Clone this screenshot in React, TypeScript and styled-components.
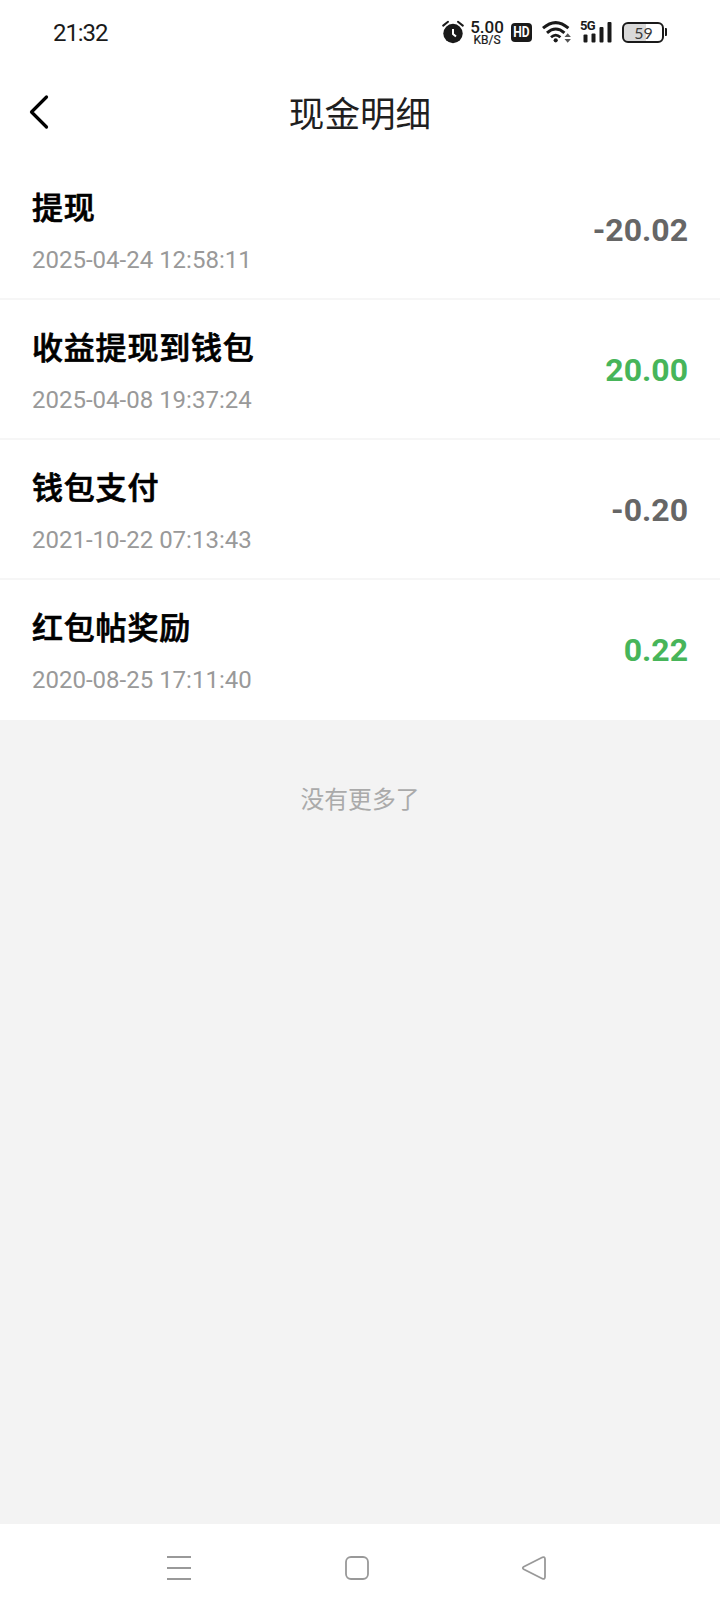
import React from "react";
import styled, { createGlobalStyle } from "styled-components";

const GlobalStyle = createGlobalStyle`
  * { box-sizing: border-box; }
  body {
    margin: 0;
    background: #f3f3f3;
    font-family: Roboto, "Noto Sans CJK SC", sans-serif;
  }
`;

const Screen = styled.div`
  width: 720px;
  height: 1612px;
  display: flex;
  flex-direction: column;
  background: #f3f3f3;
`;

const StatusBar = styled.header`
  height: 64px;
  padding: 0 53px 0 53px;
  display: flex;
  align-items: center;
  justify-content: space-between;
  background: #fff;
  color: #1a1a1a;
`;

const Clock = styled.time`
  font-size: 24px;
  line-height: 28px;
  letter-spacing: -1.1px;
  padding-top: 1px;
`;

const StatusIcons = styled.div`
  display: flex;
  align-items: center;
`;

const Rate = styled.div`
  width: 34px;
  margin: 2px 7px 0 6px;
  display: flex;
  flex-direction: column;
  align-items: center;
`;

const RateValue = styled.span`
  font-size: 17px;
  line-height: 14px;
  font-weight: 500;
`;

const RateUnit = styled.span`
  font-size: 12px;
  line-height: 12px;
  font-weight: 400;
  -webkit-text-stroke: 0.2px currentColor;
`;

const HdBadge = styled.span`
  width: 21px;
  height: 19px;
  border-radius: 4px;
  margin-right: 10px;
  margin-top: 1px;
  background: #1a1a1a;
  color: #fff;
  display: flex;
  align-items: center;
  justify-content: center;
  font-size: 14px;
  line-height: 19px;
  font-weight: 700;

  & > span {
    transform: scaleX(0.86);
  }
`;

const Signal = styled.div`
  width: 32px;
  height: 22px;
  margin-left: 9px;
  position: relative;
`;

const Generation = styled.span`
  position: absolute;
  left: -1px;
  top: -2px;
  font-size: 13px;
  line-height: 13px;
  font-weight: 700;
  letter-spacing: -0.8px;
`;

const Battery = styled.div`
  display: flex;
  align-items: center;
  gap: 1px;
  margin-left: 9px;

  &::after {
    content: "";
    width: 2px;
    height: 8px;
    border-radius: 0 1px 1px 0;
    background: #1a1a1a;
  }
`;

const BatteryBody = styled.span<{ $level: number }>`
  width: 42px;
  height: 21px;
  border: 2px solid #1a1a1a;
  border-radius: 6px;
  background: linear-gradient(
    to right,
    #d9d9d9 ${(p) => p.$level}%,
    #fff ${(p) => p.$level}%
  );
  color: #3a3a3a;
  font-family: Lato, sans-serif;
  font-size: 16px;
  line-height: 17px;
  padding-left: 1px;
  text-align: center;
`;

const NavBar = styled.nav`
  height: 96px;
  display: grid;
  grid-template-columns: 80px 1fr 80px;
  align-items: center;
  background: #fff;
`;

const BackButton = styled.button`
  height: 96px;
  padding: 0 0 0 28px;
  border: 0;
  background: none;
  display: flex;
  align-items: center;
`;

const Title = styled.h1`
  margin: 0;
  padding-top: 6px;
  font-size: 35.6px;
  line-height: 52px;
  font-weight: 400;
  text-align: center;
  color: #1f1f1f;
`;

const List = styled.ul`
  margin: 0;
  padding: 0;
  list-style: none;
  background: #fff;
`;

const Row = styled.li`
  height: 140px;
  padding: 0 32px;
  display: flex;
  align-items: center;
  justify-content: space-between;
  border-bottom: 2px solid #f6f6f6;

  &:last-child {
    border-bottom-color: #fff;
  }
`;

const Info = styled.div`
  padding-top: 5px;
  display: flex;
  flex-direction: column;
  gap: 17px;
`;

const Name = styled.span`
  font-size: 31px;
  line-height: 40px;
  font-weight: 500;
  letter-spacing: 0.8px;
  color: #000;
  -webkit-text-stroke: 0.7px #000;
`;

const DateText = styled.time`
  font-size: 24px;
  line-height: 28px;
  color: #999;
`;

const Amount = styled.span<{ $income: boolean }>`
  padding-top: 1px;
  font-size: 32px;
  line-height: 38px;
  font-weight: 700;
  color: ${(p) => (p.$income ? "#47b55a" : "#666")};
`;

const EndNote = styled.p`
  flex: 1;
  margin: 0;
  padding-top: 62px;
  font-size: 23.8px;
  line-height: 36px;
  text-align: center;
  color: #aaa;
`;

const SystemBar = styled.footer`
  height: 88px;
  padding: 0 173px 0 166px;
  display: flex;
  align-items: center;
  justify-content: space-between;
  background: #fff;
`;

const entries = [
  { name: "提现", date: "2025-04-24 12:58:11", amount: "-20.02" },
  { name: "收益提现到钱包", date: "2025-04-08 19:37:24", amount: "20.00" },
  { name: "钱包支付", date: "2021-10-22 07:13:43", amount: "-0.20" },
  { name: "红包帖奖励", date: "2020-08-25 17:11:40", amount: "0.22" },
];

const AlarmIcon = () => (
  <svg width="22" height="24" viewBox="0 0 22 24" fill="none" stroke="#1a1a1a">
    <circle cx="11" cy="13.5" r="9.7" fill="#1a1a1a" stroke="none" />
    <path d="M1.2 5.6 6 1.8M20.8 5.6 16 1.8" strokeWidth="2" strokeLinecap="round" />
    <path d="M11 9v5l3 2.6" stroke="#fff" strokeWidth="2" />
  </svg>
);

const WifiIcon = () => (
  <svg width="30" height="24" viewBox="0 0 30 24" fill="none" stroke="#1a1a1a">
    <path d="M1 8.2Q13.700 -3 26.400 8.200" strokeWidth="3" />
    <path d="M5 12.800Q13.700 5.200 22.400 12.800" strokeWidth="3" />
    <path d="M9 17.200Q13.700 13 18.400 17.200" strokeWidth="2.800" />
    <circle cx="13.700" cy="20.300" r="2.100" fill="#1a1a1a" stroke="none" />
    <path d="M22.500 17 25.700 13.300 28.900 17ZM22.500 19 25.700 22.700 28.900 19Z" fill="#555" stroke="none" />
  </svg>
);

const SignalBars = () => (
  <svg width="32" height="22" viewBox="0 0 32 22" fill="#1a1a1a">
    <rect x="2.500" y="13.500" width="4" height="8" rx="1" />
    <rect x="10.500" y="12.500" width="4" height="9" rx="1" />
    <rect x="18.500" y="6" width="4" height="15.500" rx="1" />
    <rect x="26.500" y="1" width="4" height="20.500" rx="1" />
  </svg>
);

export default function App() {
  return (
    <>
      <GlobalStyle />
      <Screen>
        <StatusBar>
          <Clock>21:32</Clock>
          <StatusIcons>
            <AlarmIcon />
            <Rate>
              <RateValue>5.00</RateValue>
              <RateUnit>KB/S</RateUnit>
            </Rate>
            <HdBadge>
              <span>HD</span>
            </HdBadge>
            <WifiIcon />
            <Signal>
              <Generation>5G</Generation>
              <SignalBars />
            </Signal>
            <Battery>
              <BatteryBody $level={59}>59</BatteryBody>
            </Battery>
          </StatusIcons>
        </StatusBar>
        <NavBar>
          <BackButton aria-label="返回">
            <svg width="22" height="36" viewBox="0 0 22 36" fill="none" stroke="#000" strokeWidth="3.200" strokeLinecap="round" strokeLinejoin="round">
              <path d="M18.500 3 3.500 18 18.500 33" />
            </svg>
          </BackButton>
          <Title>现金明细</Title>
        </NavBar>
        <List>
          {entries.map((e) => (
            <Row key={e.date}>
              <Info>
                <Name>{e.name}</Name>
                <DateText>{e.date}</DateText>
              </Info>
              <Amount $income={!e.amount.startsWith("-")}>{e.amount}</Amount>
            </Row>
          ))}
        </List>
        <EndNote>没有更多了</EndNote>
        <SystemBar>
          <svg width="26" height="26" viewBox="0 0 26 26" stroke="#999" strokeWidth="2">
            <path d="M1 2h24M1 13h24M1 24h24" />
          </svg>
          <svg width="26" height="26" viewBox="0 0 26 26" fill="none" stroke="#999" strokeWidth="1.800">
            <rect x="2" y="2" width="22" height="22" rx="5" />
          </svg>
          <svg width="26" height="26" viewBox="0 0 26 26" fill="none" stroke="#999" strokeWidth="1.800" strokeLinejoin="round">
            <path d="M2.700 11.700 21.500 2.300Q23.800 1.500 24 4V22Q23.800 24.500 21.500 23.700L2.700 14.300Q.900 13 2.700 11.700Z" />
          </svg>
        </SystemBar>
      </Screen>
    </>
  );
}
